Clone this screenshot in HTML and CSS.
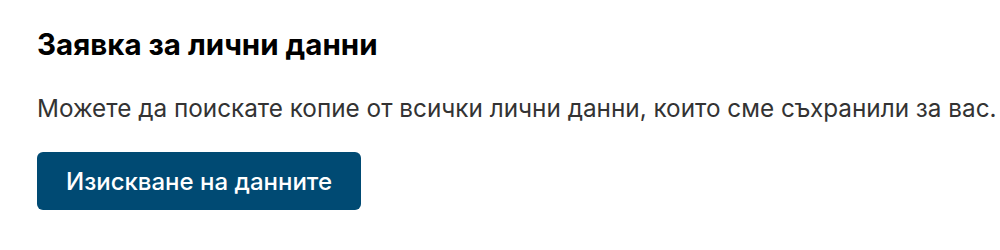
FILE: index.html
```html
<!DOCTYPE html>
<html lang="bg">
<head>
    <meta charset="UTF-8">
    <meta name="viewport" content="width=device-width, initial-scale=1.0">
    <title>Заявка за лични данни</title>
    <link rel="stylesheet" href="styles.css">
</head>
<body>
    <!-- Блок за заявка на данни -->
    <section class="data-request">
        <h2 class="data-request-title">Заявка за лични данни</h2>
        <p class="data-request-text">Можете да поискате копие от всички лични данни, които сме съхранили за вас.</p>
        <button class="data-request-btn" type="button">Изискване на данните</button>
    </section>
</body>
</html>
```

FILE: styles.css
```css
body {
    margin: 0;
    background: #ffffff;
    color: #333333;
    font-family: Inter, "Noto Sans", sans-serif;
}

.data-request {
    padding: 24px 37px;
}

.data-request-title {
    margin: 0;
    font-size: 29.5px;
    font-weight: 700;
    line-height: 40px;
    color: #000000;
}

.data-request-text {
    margin: 26px 0 0;
    font-size: 24.3px;
    line-height: 36px;
    color: #333333;
    white-space: nowrap;
}

.data-request-btn {
    display: block;
    margin-top: 26px;
    height: 58px;
    padding: 0 29px;
    border: none;
    border-radius: 6px;
    background: #004a73;
    color: #ffffff;
    font-family: inherit;
    font-size: 24px;
    font-weight: 500;
    cursor: pointer;
}
```
